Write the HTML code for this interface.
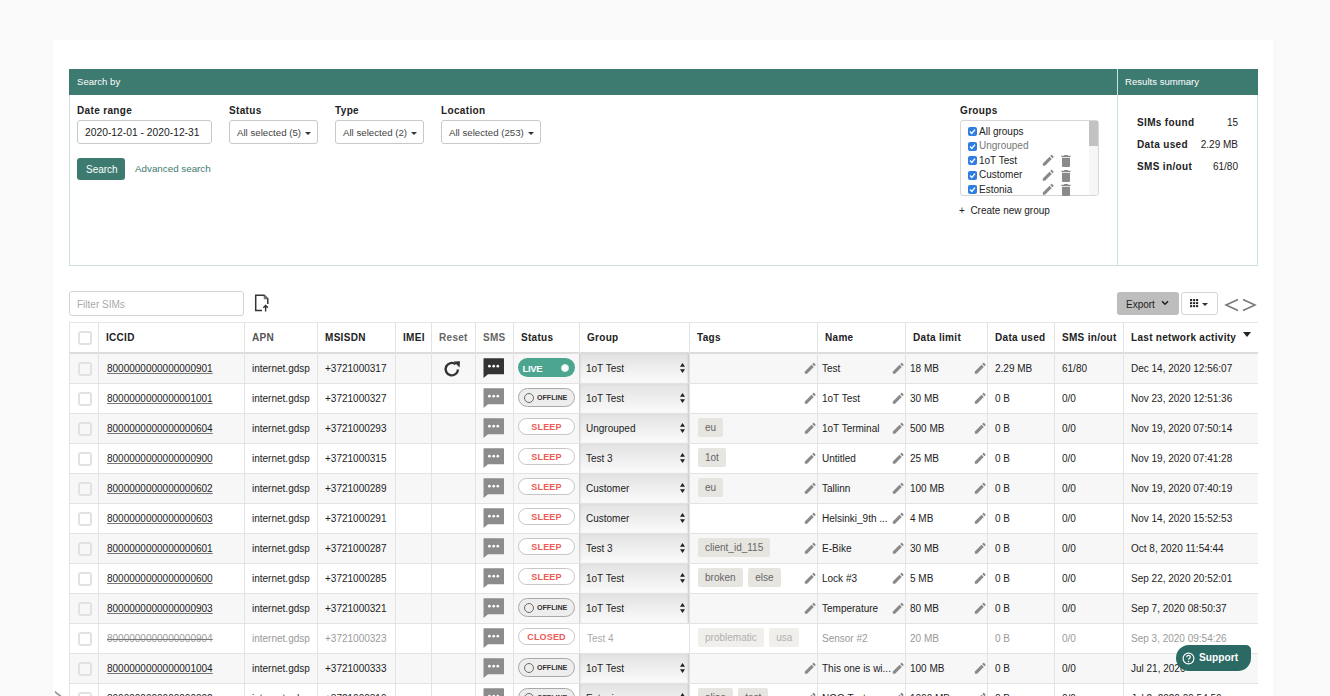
<!DOCTYPE html>
<html><head><meta charset="utf-8"><style>
*{box-sizing:border-box;margin:0;padding:0}
html,body{width:1330px;height:696px;overflow:hidden;background:#f9f9f9;font-family:"Liberation Sans", sans-serif;color:#222}
.a{position:absolute}
.t{position:absolute;white-space:nowrap;line-height:1}
.lbl{font-weight:bold;font-size:10px;letter-spacing:0.35px;color:#222}
.inp{position:absolute;background:#fff;border:1px solid #c9c9c9;border-radius:3px}
.caret{display:inline-block;width:0;height:0;border-left:3px solid transparent;border-right:3px solid transparent;border-top:3px solid #333;vertical-align:middle;margin-left:4px}
.hd{font-weight:bold;font-size:10px;letter-spacing:0.3px;color:#222}
.cell{font-size:10px;color:#222}
</style></head><body>
<div class="a" style="left:53px;top:40px;width:1220px;height:700px;background:#fff"></div>

<div class="a" style="left:69px;top:69px;width:1189px;height:197px;border:1px solid #cfe1dd;border-top:none"></div>
<div class="a" style="left:69px;top:69px;width:1048px;height:26px;background:#3d7a70"></div>
<div class="a" style="left:1118px;top:69px;width:140px;height:26px;background:#3d7a70"></div>
<div class="a" style="left:1117px;top:69px;width:1px;height:197px;background:#cfe1dd"></div>
<div class="t" style="left:77px;top:77px;font-size:9.6px;color:#fff">Search by</div>
<div class="t" style="left:1125px;top:77px;font-size:9.6px;color:#fff">Results summary</div>
<div class="t lbl" style="left:77px;top:106px">Date range</div>
<div class="inp" style="left:77px;top:120px;width:135px;height:24px"></div>
<div class="t" style="left:85px;top:128px;font-size:10.3px;color:#222">2020-12-01 - 2020-12-31</div>
<div class="t lbl" style="left:229px;top:106px">Status</div>
<div class="inp" style="left:229px;top:120px;width:89px;height:24px"></div>
<div class="t" style="left:237px;top:128px;font-size:9.7px;color:#444">All selected (5)<span class="caret"></span></div>
<div class="t lbl" style="left:335px;top:106px">Type</div>
<div class="inp" style="left:335px;top:120px;width:89px;height:24px"></div>
<div class="t" style="left:343px;top:128px;font-size:9.7px;color:#444">All selected (2)<span class="caret"></span></div>
<div class="t lbl" style="left:441px;top:106px">Location</div>
<div class="inp" style="left:441px;top:120px;width:100px;height:24px"></div>
<div class="t" style="left:449px;top:128px;font-size:9.7px;color:#444">All selected (253)<span class="caret"></span></div>
<div class="a" style="left:77px;top:158px;width:48px;height:22px;background:#3d7a70;border-radius:3px"></div>
<div class="t" style="left:86px;top:165px;font-size:10px;color:#fff">Search</div>
<div class="t" style="left:135px;top:164px;font-size:9.8px;color:#3d7a70">Advanced search</div>
<div class="t lbl" style="left:960px;top:106px">Groups</div>
<div class="inp" style="left:960px;top:120px;width:139px;height:76px;border-color:#d6d6d6"></div>
<div class="a" style="left:1089px;top:121px;width:9px;height:74px;background:#f6f6f6"></div>
<div class="a" style="left:1089px;top:121px;width:9px;height:25px;background:#c2c2c2"></div>
<div class="a" style="left:968px;top:127.0px;width:9px;height:9px;background:#2f7de1;border-radius:2px"></div>
<svg class="a" style="left:968px;top:127.0px" width="9" height="9" viewBox="0 0 9 9"><path d="M2 4.6L3.8 6.4L7 2.6" fill="none" stroke="#fff" stroke-width="1.4"/></svg>
<div class="t" style="left:979px;top:126.5px;font-size:10px;color:#222">All groups</div>
<div class="a" style="left:968px;top:141.5px;width:9px;height:9px;background:#2f7de1;border-radius:2px"></div>
<svg class="a" style="left:968px;top:141.5px" width="9" height="9" viewBox="0 0 9 9"><path d="M2 4.6L3.8 6.4L7 2.6" fill="none" stroke="#fff" stroke-width="1.4"/></svg>
<div class="t" style="left:979px;top:141.0px;font-size:10px;color:#777">Ungrouped</div>
<div class="a" style="left:968px;top:156.0px;width:9px;height:9px;background:#2f7de1;border-radius:2px"></div>
<svg class="a" style="left:968px;top:156.0px" width="9" height="9" viewBox="0 0 9 9"><path d="M2 4.6L3.8 6.4L7 2.6" fill="none" stroke="#fff" stroke-width="1.4"/></svg>
<div class="t" style="left:979px;top:155.5px;font-size:10px;color:#222">1oT Test</div>
<svg style="position:absolute;left:1041px;top:153.0px" width="14.5" height="14.5" viewBox="0 0 24 24"><path fill="#8a8a8a" d="M3 17.25V21h3.75L17.81 9.94l-3.75-3.75L3 17.25zM20.71 7.04c.39-.39.39-1.02 0-1.41l-2.34-2.34c-.39-.39-1.02-.39-1.41 0l-1.83 1.83 3.75 3.75 1.83-1.83z"/></svg>
<svg style="position:absolute;left:1061px;top:155.0px" width="10" height="12" viewBox="5 3 14 18"><path fill="#8a8a8a" d="M6 19c0 1.1.9 2 2 2h8c1.1 0 2-.9 2-2V7H6v12zM19 4h-3.5l-1-1h-5l-1 1H5v2h14V4z"/></svg>
<div class="a" style="left:968px;top:170.5px;width:9px;height:9px;background:#2f7de1;border-radius:2px"></div>
<svg class="a" style="left:968px;top:170.5px" width="9" height="9" viewBox="0 0 9 9"><path d="M2 4.6L3.8 6.4L7 2.6" fill="none" stroke="#fff" stroke-width="1.4"/></svg>
<div class="t" style="left:979px;top:170.0px;font-size:10px;color:#222">Customer</div>
<svg style="position:absolute;left:1041px;top:167.5px" width="14.5" height="14.5" viewBox="0 0 24 24"><path fill="#8a8a8a" d="M3 17.25V21h3.75L17.81 9.94l-3.75-3.75L3 17.25zM20.71 7.04c.39-.39.39-1.02 0-1.41l-2.34-2.34c-.39-.39-1.02-.39-1.41 0l-1.83 1.83 3.75 3.75 1.83-1.83z"/></svg>
<svg style="position:absolute;left:1061px;top:169.5px" width="10" height="12" viewBox="5 3 14 18"><path fill="#8a8a8a" d="M6 19c0 1.1.9 2 2 2h8c1.1 0 2-.9 2-2V7H6v12zM19 4h-3.5l-1-1h-5l-1 1H5v2h14V4z"/></svg>
<div class="a" style="left:968px;top:185.0px;width:9px;height:9px;background:#2f7de1;border-radius:2px"></div>
<svg class="a" style="left:968px;top:185.0px" width="9" height="9" viewBox="0 0 9 9"><path d="M2 4.6L3.8 6.4L7 2.6" fill="none" stroke="#fff" stroke-width="1.4"/></svg>
<div class="t" style="left:979px;top:184.5px;font-size:10px;color:#222">Estonia</div>
<svg style="position:absolute;left:1041px;top:182.0px" width="14.5" height="14.5" viewBox="0 0 24 24"><path fill="#8a8a8a" d="M3 17.25V21h3.75L17.81 9.94l-3.75-3.75L3 17.25zM20.71 7.04c.39-.39.39-1.02 0-1.41l-2.34-2.34c-.39-.39-1.02-.39-1.41 0l-1.83 1.83 3.75 3.75 1.83-1.83z"/></svg>
<svg style="position:absolute;left:1061px;top:184.0px" width="10" height="12" viewBox="5 3 14 18"><path fill="#8a8a8a" d="M6 19c0 1.1.9 2 2 2h8c1.1 0 2-.9 2-2V7H6v12zM19 4h-3.5l-1-1h-5l-1 1H5v2h14V4z"/></svg>
<div class="t" style="left:959px;top:206px;font-size:10px;color:#222">+&nbsp;&nbsp;Create new group</div>
<div class="t lbl" style="left:1137px;top:118px">SIMs found</div>
<div class="t" style="left:1138px;width:100px;text-align:right;top:118px;font-size:10px;color:#222">15</div>
<div class="t lbl" style="left:1137px;top:140px">Data used</div>
<div class="t" style="left:1138px;width:100px;text-align:right;top:140px;font-size:10px;color:#222">2.29 MB</div>
<div class="t lbl" style="left:1137px;top:162px">SMS in/out</div>
<div class="t" style="left:1138px;width:100px;text-align:right;top:162px;font-size:10px;color:#222">61/80</div>
<div class="inp" style="left:69px;top:291px;width:175px;height:25px;border-color:#d3d3d3"></div>
<div class="t" style="left:77px;top:299.5px;font-size:10px;color:#aaa">Filter SIMs</div>
<svg class="a" style="left:254px;top:294px" width="16" height="18" viewBox="0 0 16 18"><path d="M8 16.5H1.7V1.2H10.2L13.8 4.8V10" fill="none" stroke="#333" stroke-width="1.5"/><path d="M10.2 1.2V4.8H13.8" fill="#888" stroke="#555" stroke-width="0.8"/><path d="M11.6 17.5V11.8M9.3 13.8L11.6 11.5L13.9 13.8" fill="none" stroke="#333" stroke-width="1.4"/></svg>
<div class="a" style="left:1117px;top:292px;width:62px;height:23px;background:#bdbdbd;border-radius:3px"></div>
<div class="t" style="left:1126px;top:300px;font-size:10px;color:#222">Export</div>
<svg class="a" style="left:1161px;top:300px" width="8" height="6" viewBox="0 0 8 6"><path d="M1 1.2L4 4.2L7 1.2" fill="none" stroke="#222" stroke-width="1.6"/></svg>
<div class="inp" style="left:1181px;top:292px;width:37px;height:23px;border-color:#d6d6d6"></div>
<svg class="a" style="left:1190px;top:299px" width="9" height="9" viewBox="0 0 9 9"><circle cx="1.1" cy="1.1" r="1.2" fill="#222"/><circle cx="1.1" cy="4.1" r="1.2" fill="#222"/><circle cx="1.1" cy="7.1" r="1.2" fill="#222"/><circle cx="4.1" cy="1.1" r="1.2" fill="#222"/><circle cx="4.1" cy="4.1" r="1.2" fill="#222"/><circle cx="4.1" cy="7.1" r="1.2" fill="#222"/><circle cx="7.1" cy="1.1" r="1.2" fill="#222"/><circle cx="7.1" cy="4.1" r="1.2" fill="#222"/><circle cx="7.1" cy="7.1" r="1.2" fill="#222"/></svg>
<div class="a" style="left:1202px;top:303px;width:0;height:0;border-left:3px solid transparent;border-right:3px solid transparent;border-top:3px solid #333"></div>
<svg class="a" style="left:1224px;top:297px" width="34" height="16" viewBox="0 0 34 16"><path d="M14 2.5L2 8L14 13.5M19 2.5L31 8L19 13.5" fill="none" stroke="#777" stroke-width="1.5"/></svg>
<div class="a" style="left:69px;top:353px;width:1189px;height:30px;background:#f7f7f7"></div>
<div class="a" style="left:69px;top:383px;width:1189px;height:30px;background:#fff"></div>
<div class="a" style="left:69px;top:413px;width:1189px;height:30px;background:#f7f7f7"></div>
<div class="a" style="left:69px;top:443px;width:1189px;height:30px;background:#fff"></div>
<div class="a" style="left:69px;top:473px;width:1189px;height:30px;background:#f7f7f7"></div>
<div class="a" style="left:69px;top:503px;width:1189px;height:30px;background:#fff"></div>
<div class="a" style="left:69px;top:533px;width:1189px;height:30px;background:#f7f7f7"></div>
<div class="a" style="left:69px;top:563px;width:1189px;height:30px;background:#fff"></div>
<div class="a" style="left:69px;top:593px;width:1189px;height:30px;background:#f7f7f7"></div>
<div class="a" style="left:69px;top:623px;width:1189px;height:30px;background:#fff"></div>
<div class="a" style="left:69px;top:653px;width:1189px;height:30px;background:#f7f7f7"></div>
<div class="a" style="left:69px;top:683px;width:1189px;height:30px;background:#fff"></div>
<div class="a" style="left:69px;top:322px;width:1189px;height:1px;background:#e6e6e6"></div>
<div class="a" style="left:69px;top:352px;width:1189px;height:2px;background:#dcdcdc"></div>
<div class="a" style="left:69px;top:383px;width:1189px;height:1px;background:#e3e3e3"></div>
<div class="a" style="left:69px;top:413px;width:1189px;height:1px;background:#e3e3e3"></div>
<div class="a" style="left:69px;top:443px;width:1189px;height:1px;background:#e3e3e3"></div>
<div class="a" style="left:69px;top:473px;width:1189px;height:1px;background:#e3e3e3"></div>
<div class="a" style="left:69px;top:503px;width:1189px;height:1px;background:#e3e3e3"></div>
<div class="a" style="left:69px;top:533px;width:1189px;height:1px;background:#e3e3e3"></div>
<div class="a" style="left:69px;top:563px;width:1189px;height:1px;background:#e3e3e3"></div>
<div class="a" style="left:69px;top:593px;width:1189px;height:1px;background:#e3e3e3"></div>
<div class="a" style="left:69px;top:623px;width:1189px;height:1px;background:#e3e3e3"></div>
<div class="a" style="left:69px;top:653px;width:1189px;height:1px;background:#e3e3e3"></div>
<div class="a" style="left:69px;top:683px;width:1189px;height:1px;background:#e3e3e3"></div>
<div class="a" style="left:69px;top:713px;width:1189px;height:1px;background:#e3e3e3"></div>
<div class="a" style="left:69px;top:322px;width:1px;height:391px;background:#e3e3e3"></div>
<div class="a" style="left:98px;top:322px;width:1px;height:391px;background:#e3e3e3"></div>
<div class="a" style="left:244px;top:322px;width:1px;height:391px;background:#e3e3e3"></div>
<div class="a" style="left:317px;top:322px;width:1px;height:391px;background:#e3e3e3"></div>
<div class="a" style="left:395px;top:322px;width:1px;height:391px;background:#e3e3e3"></div>
<div class="a" style="left:431px;top:322px;width:1px;height:391px;background:#e3e3e3"></div>
<div class="a" style="left:475px;top:322px;width:1px;height:391px;background:#e3e3e3"></div>
<div class="a" style="left:513px;top:322px;width:1px;height:391px;background:#e3e3e3"></div>
<div class="a" style="left:579px;top:322px;width:1px;height:391px;background:#e3e3e3"></div>
<div class="a" style="left:689px;top:322px;width:1px;height:391px;background:#e3e3e3"></div>
<div class="a" style="left:817px;top:322px;width:1px;height:391px;background:#e3e3e3"></div>
<div class="a" style="left:905px;top:322px;width:1px;height:391px;background:#e3e3e3"></div>
<div class="a" style="left:987px;top:322px;width:1px;height:391px;background:#e3e3e3"></div>
<div class="a" style="left:1054px;top:322px;width:1px;height:391px;background:#e3e3e3"></div>
<div class="a" style="left:1123px;top:322px;width:1px;height:391px;background:#e3e3e3"></div>
<div class="a" style="left:78px;top:331px;width:14px;height:14px;border:2px solid #e2e2e2;border-radius:3px;background:#fff"></div>
<div class="t hd" style="left:106px;top:333px;color:#222">ICCID</div>
<div class="t hd" style="left:252px;top:333px;color:#555">APN</div>
<div class="t hd" style="left:325px;top:333px;color:#222">MSISDN</div>
<div class="t hd" style="left:403px;top:333px;color:#222">IMEI</div>
<div class="t hd" style="left:439px;top:333px;color:#666">Reset</div>
<div class="t hd" style="left:483px;top:333px;color:#666">SMS</div>
<div class="t hd" style="left:521px;top:333px;color:#222">Status</div>
<div class="t hd" style="left:587px;top:333px;color:#222">Group</div>
<div class="t hd" style="left:697px;top:333px;color:#222">Tags</div>
<div class="t hd" style="left:825px;top:333px;color:#222">Name</div>
<div class="t hd" style="left:913px;top:333px;color:#222">Data limit</div>
<div class="t hd" style="left:995px;top:333px;color:#222">Data used</div>
<div class="t hd" style="left:1062px;top:333px;color:#222">SMS in/out</div>
<div class="t hd" style="left:1131px;top:333px;color:#222">Last network activity</div>
<div class="a" style="left:1243px;top:332px;width:0;height:0;border-left:4px solid transparent;border-right:4px solid transparent;border-top:5px solid #222"></div>
<div class="a" style="left:77.5px;top:361.5px;width:14px;height:14px;border:2px solid #e2e2e2;border-radius:3px"></div>
<div class="t cell" style="left:107px;top:363.5px;color:#222;text-decoration:underline;text-decoration-color:#777">8000000000000000901</div>
<div class="t cell" style="left:252px;top:363.5px;color:#222">internet.gdsp</div>
<div class="t cell" style="left:325px;top:363.5px;color:#222">+3721000317</div>
<svg style="position:absolute;left:443px;top:360px" width="18" height="18" viewBox="0 0 18 18"><path fill="none" stroke="#333" stroke-width="2.4" d="M15 9.5A6.2 6.2 0 1 1 12.6 4.2"/><path fill="#333" d="M10.5 1.5L17 1.2L16.6 7.5Z"/></svg>
<svg style="position:absolute;left:483px;top:358px" width="22" height="21" viewBox="0 0 22 21"><path fill="#333" d="M1.6 0.2H20.4Q21 0.2 21 0.8V15.7Q21 16.3 20.4 16.3H5L0.5 20V0.8Q0.5 0.2 1.1 0.2Z"/><circle cx="6.4" cy="8.2" r="1.35" fill="#fff"/><circle cx="10.7" cy="8.2" r="1.35" fill="#fff"/><circle cx="14.8" cy="8.2" r="1.35" fill="#fff"/></svg>
<div class="a" style="left:518px;top:358px;width:57px;height:19px;border-radius:10px;background:#4ba58f"></div>
<div class="t" style="left:522.5px;top:363.5px;font-size:9.6px;letter-spacing:-0.35px;font-weight:bold;color:#fff">LIVE</div>
<div class="a" style="left:560.5px;top:363.5px;width:8.8px;height:8.8px;border-radius:50%;background:#fff;border:1px solid #d8ece6"></div>
<div class="a" style="left:579px;top:354px;width:110px;height:29px;background:linear-gradient(#e2e2e2,#fbfbfb);box-shadow:inset 2px 0 2px -1px #c8c8c8, inset -2px 0 2px -1px #c8c8c8"></div>
<div class="t cell" style="left:586px;top:363.5px">1oT Test</div>
<svg class="a" style="left:680px;top:363px" width="5" height="10" viewBox="0 0 5 10"><path d="M2.5 0L5 3.8H0Z M2.5 10L5 6.2H0Z" fill="#222"/></svg>
<svg style="position:absolute;left:803px;top:360.5px" width="14.5" height="14.5" viewBox="0 0 24 24"><path fill="#8a8a8a" d="M3 17.25V21h3.75L17.81 9.94l-3.75-3.75L3 17.25zM20.71 7.04c.39-.39.39-1.02 0-1.41l-2.34-2.34c-.39-.39-1.02-.39-1.41 0l-1.83 1.83 3.75 3.75 1.83-1.83z"/></svg>
<svg style="position:absolute;left:891px;top:360.5px" width="14.5" height="14.5" viewBox="0 0 24 24"><path fill="#8a8a8a" d="M3 17.25V21h3.75L17.81 9.94l-3.75-3.75L3 17.25zM20.71 7.04c.39-.39.39-1.02 0-1.41l-2.34-2.34c-.39-.39-1.02-.39-1.41 0l-1.83 1.83 3.75 3.75 1.83-1.83z"/></svg>
<svg style="position:absolute;left:973px;top:360.5px" width="14.5" height="14.5" viewBox="0 0 24 24"><path fill="#8a8a8a" d="M3 17.25V21h3.75L17.81 9.94l-3.75-3.75L3 17.25zM20.71 7.04c.39-.39.39-1.02 0-1.41l-2.34-2.34c-.39-.39-1.02-.39-1.41 0l-1.83 1.83 3.75 3.75 1.83-1.83z"/></svg>
<div class="t cell" style="left:822px;top:363.5px;color:#222">Test</div>
<div class="t cell" style="left:910px;top:363.5px;color:#222">18 MB</div>
<div class="t cell" style="left:995px;top:363.5px;color:#222">2.29 MB</div>
<div class="t cell" style="left:1062px;top:363.5px;color:#222">61/80</div>
<div class="t cell" style="left:1131px;top:363.5px;color:#222">Dec 14, 2020 12:56:07</div>
<div class="a" style="left:77.5px;top:391.5px;width:14px;height:14px;border:2px solid #e2e2e2;border-radius:3px"></div>
<div class="t cell" style="left:107px;top:393.5px;color:#222;text-decoration:underline;text-decoration-color:#777">8000000000000001001</div>
<div class="t cell" style="left:252px;top:393.5px;color:#222">internet.gdsp</div>
<div class="t cell" style="left:325px;top:393.5px;color:#222">+3721000327</div>
<svg style="position:absolute;left:483px;top:388px" width="22" height="21" viewBox="0 0 22 21"><path fill="#8c8c8c" d="M1.6 0.2H20.4Q21 0.2 21 0.8V15.7Q21 16.3 20.4 16.3H5L0.5 20V0.8Q0.5 0.2 1.1 0.2Z"/><circle cx="6.4" cy="8.2" r="1.35" fill="#fff"/><circle cx="10.7" cy="8.2" r="1.35" fill="#fff"/><circle cx="14.8" cy="8.2" r="1.35" fill="#fff"/></svg>
<div class="a" style="left:518px;top:388px;width:57px;height:19px;border-radius:10px;background:#ededed;border:1px solid #a9a9a9"></div>
<div class="a" style="left:523.5px;top:392.8px;width:10px;height:10px;border-radius:50%;border:1.4px solid #6a6a6a"></div>
<div class="t" style="left:537px;top:394.5px;font-size:7.1px;font-weight:bold;color:#333">OFFLINE</div>
<div class="a" style="left:579px;top:384px;width:110px;height:29px;background:linear-gradient(#e2e2e2,#fbfbfb);box-shadow:inset 2px 0 2px -1px #c8c8c8, inset -2px 0 2px -1px #c8c8c8"></div>
<div class="t cell" style="left:586px;top:393.5px">1oT Test</div>
<svg class="a" style="left:680px;top:393px" width="5" height="10" viewBox="0 0 5 10"><path d="M2.5 0L5 3.8H0Z M2.5 10L5 6.2H0Z" fill="#222"/></svg>
<svg style="position:absolute;left:803px;top:390.5px" width="14.5" height="14.5" viewBox="0 0 24 24"><path fill="#8a8a8a" d="M3 17.25V21h3.75L17.81 9.94l-3.75-3.75L3 17.25zM20.71 7.04c.39-.39.39-1.02 0-1.41l-2.34-2.34c-.39-.39-1.02-.39-1.41 0l-1.83 1.83 3.75 3.75 1.83-1.83z"/></svg>
<svg style="position:absolute;left:891px;top:390.5px" width="14.5" height="14.5" viewBox="0 0 24 24"><path fill="#8a8a8a" d="M3 17.25V21h3.75L17.81 9.94l-3.75-3.75L3 17.25zM20.71 7.04c.39-.39.39-1.02 0-1.41l-2.34-2.34c-.39-.39-1.02-.39-1.41 0l-1.83 1.83 3.75 3.75 1.83-1.83z"/></svg>
<svg style="position:absolute;left:973px;top:390.5px" width="14.5" height="14.5" viewBox="0 0 24 24"><path fill="#8a8a8a" d="M3 17.25V21h3.75L17.81 9.94l-3.75-3.75L3 17.25zM20.71 7.04c.39-.39.39-1.02 0-1.41l-2.34-2.34c-.39-.39-1.02-.39-1.41 0l-1.83 1.83 3.75 3.75 1.83-1.83z"/></svg>
<div class="t cell" style="left:822px;top:393.5px;color:#222">1oT Test</div>
<div class="t cell" style="left:910px;top:393.5px;color:#222">30 MB</div>
<div class="t cell" style="left:995px;top:393.5px;color:#222">0 B</div>
<div class="t cell" style="left:1062px;top:393.5px;color:#222">0/0</div>
<div class="t cell" style="left:1131px;top:393.5px;color:#222">Nov 23, 2020 12:51:36</div>
<div class="a" style="left:77.5px;top:421.5px;width:14px;height:14px;border:2px solid #e2e2e2;border-radius:3px"></div>
<div class="t cell" style="left:107px;top:423.5px;color:#222;text-decoration:underline;text-decoration-color:#777">8000000000000000604</div>
<div class="t cell" style="left:252px;top:423.5px;color:#222">internet.gdsp</div>
<div class="t cell" style="left:325px;top:423.5px;color:#222">+3721000293</div>
<svg style="position:absolute;left:483px;top:418px" width="22" height="21" viewBox="0 0 22 21"><path fill="#8c8c8c" d="M1.6 0.2H20.4Q21 0.2 21 0.8V15.7Q21 16.3 20.4 16.3H5L0.5 20V0.8Q0.5 0.2 1.1 0.2Z"/><circle cx="6.4" cy="8.2" r="1.35" fill="#fff"/><circle cx="10.7" cy="8.2" r="1.35" fill="#fff"/><circle cx="14.8" cy="8.2" r="1.35" fill="#fff"/></svg>
<div class="a" style="left:518px;top:418px;width:57px;height:17px;border-radius:9px;background:#fff;border:1px solid #c6c6c6"></div>
<div class="t" style="left:518px;width:57px;text-align:center;top:422.5px;font-size:9px;letter-spacing:0.15px;font-weight:bold;color:#ec5a55">SLEEP</div>
<div class="a" style="left:579px;top:414px;width:110px;height:29px;background:linear-gradient(#e2e2e2,#fbfbfb);box-shadow:inset 2px 0 2px -1px #c8c8c8, inset -2px 0 2px -1px #c8c8c8"></div>
<div class="t cell" style="left:586px;top:423.5px">Ungrouped</div>
<svg class="a" style="left:680px;top:423px" width="5" height="10" viewBox="0 0 5 10"><path d="M2.5 0L5 3.8H0Z M2.5 10L5 6.2H0Z" fill="#222"/></svg>
<div class="t cell" style="left:698px;top:418px;line-height:19px"><span style="display:inline-block;height:19px;line-height:19px;padding:0 7px;margin-right:5.6px;border-radius:2px;background:#e6e5e0;color:#666">eu</span></div>
<svg style="position:absolute;left:803px;top:420.5px" width="14.5" height="14.5" viewBox="0 0 24 24"><path fill="#8a8a8a" d="M3 17.25V21h3.75L17.81 9.94l-3.75-3.75L3 17.25zM20.71 7.04c.39-.39.39-1.02 0-1.41l-2.34-2.34c-.39-.39-1.02-.39-1.41 0l-1.83 1.83 3.75 3.75 1.83-1.83z"/></svg>
<svg style="position:absolute;left:891px;top:420.5px" width="14.5" height="14.5" viewBox="0 0 24 24"><path fill="#8a8a8a" d="M3 17.25V21h3.75L17.81 9.94l-3.75-3.75L3 17.25zM20.71 7.04c.39-.39.39-1.02 0-1.41l-2.34-2.34c-.39-.39-1.02-.39-1.41 0l-1.83 1.83 3.75 3.75 1.83-1.83z"/></svg>
<svg style="position:absolute;left:973px;top:420.5px" width="14.5" height="14.5" viewBox="0 0 24 24"><path fill="#8a8a8a" d="M3 17.25V21h3.75L17.81 9.94l-3.75-3.75L3 17.25zM20.71 7.04c.39-.39.39-1.02 0-1.41l-2.34-2.34c-.39-.39-1.02-.39-1.41 0l-1.83 1.83 3.75 3.75 1.83-1.83z"/></svg>
<div class="t cell" style="left:822px;top:423.5px;color:#222">1oT Terminal</div>
<div class="t cell" style="left:910px;top:423.5px;color:#222">500 MB</div>
<div class="t cell" style="left:995px;top:423.5px;color:#222">0 B</div>
<div class="t cell" style="left:1062px;top:423.5px;color:#222">0/0</div>
<div class="t cell" style="left:1131px;top:423.5px;color:#222">Nov 19, 2020 07:50:14</div>
<div class="a" style="left:77.5px;top:451.5px;width:14px;height:14px;border:2px solid #e2e2e2;border-radius:3px"></div>
<div class="t cell" style="left:107px;top:453.5px;color:#222;text-decoration:underline;text-decoration-color:#777">8000000000000000900</div>
<div class="t cell" style="left:252px;top:453.5px;color:#222">internet.gdsp</div>
<div class="t cell" style="left:325px;top:453.5px;color:#222">+3721000315</div>
<svg style="position:absolute;left:483px;top:448px" width="22" height="21" viewBox="0 0 22 21"><path fill="#8c8c8c" d="M1.6 0.2H20.4Q21 0.2 21 0.8V15.7Q21 16.3 20.4 16.3H5L0.5 20V0.8Q0.5 0.2 1.1 0.2Z"/><circle cx="6.4" cy="8.2" r="1.35" fill="#fff"/><circle cx="10.7" cy="8.2" r="1.35" fill="#fff"/><circle cx="14.8" cy="8.2" r="1.35" fill="#fff"/></svg>
<div class="a" style="left:518px;top:448px;width:57px;height:17px;border-radius:9px;background:#fff;border:1px solid #c6c6c6"></div>
<div class="t" style="left:518px;width:57px;text-align:center;top:452.5px;font-size:9px;letter-spacing:0.15px;font-weight:bold;color:#ec5a55">SLEEP</div>
<div class="a" style="left:579px;top:444px;width:110px;height:29px;background:linear-gradient(#e2e2e2,#fbfbfb);box-shadow:inset 2px 0 2px -1px #c8c8c8, inset -2px 0 2px -1px #c8c8c8"></div>
<div class="t cell" style="left:586px;top:453.5px">Test 3</div>
<svg class="a" style="left:680px;top:453px" width="5" height="10" viewBox="0 0 5 10"><path d="M2.5 0L5 3.8H0Z M2.5 10L5 6.2H0Z" fill="#222"/></svg>
<div class="t cell" style="left:698px;top:448px;line-height:19px"><span style="display:inline-block;height:19px;line-height:19px;padding:0 7px;margin-right:5.6px;border-radius:2px;background:#e6e5e0;color:#666">1ot</span></div>
<svg style="position:absolute;left:803px;top:450.5px" width="14.5" height="14.5" viewBox="0 0 24 24"><path fill="#8a8a8a" d="M3 17.25V21h3.75L17.81 9.94l-3.75-3.75L3 17.25zM20.71 7.04c.39-.39.39-1.02 0-1.41l-2.34-2.34c-.39-.39-1.02-.39-1.41 0l-1.83 1.83 3.75 3.75 1.83-1.83z"/></svg>
<svg style="position:absolute;left:891px;top:450.5px" width="14.5" height="14.5" viewBox="0 0 24 24"><path fill="#8a8a8a" d="M3 17.25V21h3.75L17.81 9.94l-3.75-3.75L3 17.25zM20.71 7.04c.39-.39.39-1.02 0-1.41l-2.34-2.34c-.39-.39-1.02-.39-1.41 0l-1.83 1.83 3.75 3.75 1.83-1.83z"/></svg>
<svg style="position:absolute;left:973px;top:450.5px" width="14.5" height="14.5" viewBox="0 0 24 24"><path fill="#8a8a8a" d="M3 17.25V21h3.75L17.81 9.94l-3.75-3.75L3 17.25zM20.71 7.04c.39-.39.39-1.02 0-1.41l-2.34-2.34c-.39-.39-1.02-.39-1.41 0l-1.83 1.83 3.75 3.75 1.83-1.83z"/></svg>
<div class="t cell" style="left:822px;top:453.5px;color:#222">Untitled</div>
<div class="t cell" style="left:910px;top:453.5px;color:#222">25 MB</div>
<div class="t cell" style="left:995px;top:453.5px;color:#222">0 B</div>
<div class="t cell" style="left:1062px;top:453.5px;color:#222">0/0</div>
<div class="t cell" style="left:1131px;top:453.5px;color:#222">Nov 19, 2020 07:41:28</div>
<div class="a" style="left:77.5px;top:481.5px;width:14px;height:14px;border:2px solid #e2e2e2;border-radius:3px"></div>
<div class="t cell" style="left:107px;top:483.5px;color:#222;text-decoration:underline;text-decoration-color:#777">8000000000000000602</div>
<div class="t cell" style="left:252px;top:483.5px;color:#222">internet.gdsp</div>
<div class="t cell" style="left:325px;top:483.5px;color:#222">+3721000289</div>
<svg style="position:absolute;left:483px;top:478px" width="22" height="21" viewBox="0 0 22 21"><path fill="#8c8c8c" d="M1.6 0.2H20.4Q21 0.2 21 0.8V15.7Q21 16.3 20.4 16.3H5L0.5 20V0.8Q0.5 0.2 1.1 0.2Z"/><circle cx="6.4" cy="8.2" r="1.35" fill="#fff"/><circle cx="10.7" cy="8.2" r="1.35" fill="#fff"/><circle cx="14.8" cy="8.2" r="1.35" fill="#fff"/></svg>
<div class="a" style="left:518px;top:478px;width:57px;height:17px;border-radius:9px;background:#fff;border:1px solid #c6c6c6"></div>
<div class="t" style="left:518px;width:57px;text-align:center;top:482.5px;font-size:9px;letter-spacing:0.15px;font-weight:bold;color:#ec5a55">SLEEP</div>
<div class="a" style="left:579px;top:474px;width:110px;height:29px;background:linear-gradient(#e2e2e2,#fbfbfb);box-shadow:inset 2px 0 2px -1px #c8c8c8, inset -2px 0 2px -1px #c8c8c8"></div>
<div class="t cell" style="left:586px;top:483.5px">Customer</div>
<svg class="a" style="left:680px;top:483px" width="5" height="10" viewBox="0 0 5 10"><path d="M2.5 0L5 3.8H0Z M2.5 10L5 6.2H0Z" fill="#222"/></svg>
<div class="t cell" style="left:698px;top:478px;line-height:19px"><span style="display:inline-block;height:19px;line-height:19px;padding:0 7px;margin-right:5.6px;border-radius:2px;background:#e6e5e0;color:#666">eu</span></div>
<svg style="position:absolute;left:803px;top:480.5px" width="14.5" height="14.5" viewBox="0 0 24 24"><path fill="#8a8a8a" d="M3 17.25V21h3.75L17.81 9.94l-3.75-3.75L3 17.25zM20.71 7.04c.39-.39.39-1.02 0-1.41l-2.34-2.34c-.39-.39-1.02-.39-1.41 0l-1.83 1.83 3.75 3.75 1.83-1.83z"/></svg>
<svg style="position:absolute;left:891px;top:480.5px" width="14.5" height="14.5" viewBox="0 0 24 24"><path fill="#8a8a8a" d="M3 17.25V21h3.75L17.81 9.94l-3.75-3.75L3 17.25zM20.71 7.04c.39-.39.39-1.02 0-1.41l-2.34-2.34c-.39-.39-1.02-.39-1.41 0l-1.83 1.83 3.75 3.75 1.83-1.83z"/></svg>
<svg style="position:absolute;left:973px;top:480.5px" width="14.5" height="14.5" viewBox="0 0 24 24"><path fill="#8a8a8a" d="M3 17.25V21h3.75L17.81 9.94l-3.75-3.75L3 17.25zM20.71 7.04c.39-.39.39-1.02 0-1.41l-2.34-2.34c-.39-.39-1.02-.39-1.41 0l-1.83 1.83 3.75 3.75 1.83-1.83z"/></svg>
<div class="t cell" style="left:822px;top:483.5px;color:#222">Tallinn</div>
<div class="t cell" style="left:910px;top:483.5px;color:#222">100 MB</div>
<div class="t cell" style="left:995px;top:483.5px;color:#222">0 B</div>
<div class="t cell" style="left:1062px;top:483.5px;color:#222">0/0</div>
<div class="t cell" style="left:1131px;top:483.5px;color:#222">Nov 19, 2020 07:40:19</div>
<div class="a" style="left:77.5px;top:511.5px;width:14px;height:14px;border:2px solid #e2e2e2;border-radius:3px"></div>
<div class="t cell" style="left:107px;top:513.5px;color:#222;text-decoration:underline;text-decoration-color:#777">8000000000000000603</div>
<div class="t cell" style="left:252px;top:513.5px;color:#222">internet.gdsp</div>
<div class="t cell" style="left:325px;top:513.5px;color:#222">+3721000291</div>
<svg style="position:absolute;left:483px;top:508px" width="22" height="21" viewBox="0 0 22 21"><path fill="#8c8c8c" d="M1.6 0.2H20.4Q21 0.2 21 0.8V15.7Q21 16.3 20.4 16.3H5L0.5 20V0.8Q0.5 0.2 1.1 0.2Z"/><circle cx="6.4" cy="8.2" r="1.35" fill="#fff"/><circle cx="10.7" cy="8.2" r="1.35" fill="#fff"/><circle cx="14.8" cy="8.2" r="1.35" fill="#fff"/></svg>
<div class="a" style="left:518px;top:508px;width:57px;height:17px;border-radius:9px;background:#fff;border:1px solid #c6c6c6"></div>
<div class="t" style="left:518px;width:57px;text-align:center;top:512.5px;font-size:9px;letter-spacing:0.15px;font-weight:bold;color:#ec5a55">SLEEP</div>
<div class="a" style="left:579px;top:504px;width:110px;height:29px;background:linear-gradient(#e2e2e2,#fbfbfb);box-shadow:inset 2px 0 2px -1px #c8c8c8, inset -2px 0 2px -1px #c8c8c8"></div>
<div class="t cell" style="left:586px;top:513.5px">Customer</div>
<svg class="a" style="left:680px;top:513px" width="5" height="10" viewBox="0 0 5 10"><path d="M2.5 0L5 3.8H0Z M2.5 10L5 6.2H0Z" fill="#222"/></svg>
<svg style="position:absolute;left:803px;top:510.5px" width="14.5" height="14.5" viewBox="0 0 24 24"><path fill="#8a8a8a" d="M3 17.25V21h3.75L17.81 9.94l-3.75-3.75L3 17.25zM20.71 7.04c.39-.39.39-1.02 0-1.41l-2.34-2.34c-.39-.39-1.02-.39-1.41 0l-1.83 1.83 3.75 3.75 1.83-1.83z"/></svg>
<svg style="position:absolute;left:891px;top:510.5px" width="14.5" height="14.5" viewBox="0 0 24 24"><path fill="#8a8a8a" d="M3 17.25V21h3.75L17.81 9.94l-3.75-3.75L3 17.25zM20.71 7.04c.39-.39.39-1.02 0-1.41l-2.34-2.34c-.39-.39-1.02-.39-1.41 0l-1.83 1.83 3.75 3.75 1.83-1.83z"/></svg>
<svg style="position:absolute;left:973px;top:510.5px" width="14.5" height="14.5" viewBox="0 0 24 24"><path fill="#8a8a8a" d="M3 17.25V21h3.75L17.81 9.94l-3.75-3.75L3 17.25zM20.71 7.04c.39-.39.39-1.02 0-1.41l-2.34-2.34c-.39-.39-1.02-.39-1.41 0l-1.83 1.83 3.75 3.75 1.83-1.83z"/></svg>
<div class="t cell" style="left:822px;top:513.5px;color:#222">Helsinki_9th ...</div>
<div class="t cell" style="left:910px;top:513.5px;color:#222">4 MB</div>
<div class="t cell" style="left:995px;top:513.5px;color:#222">0 B</div>
<div class="t cell" style="left:1062px;top:513.5px;color:#222">0/0</div>
<div class="t cell" style="left:1131px;top:513.5px;color:#222">Nov 14, 2020 15:52:53</div>
<div class="a" style="left:77.5px;top:541.5px;width:14px;height:14px;border:2px solid #e2e2e2;border-radius:3px"></div>
<div class="t cell" style="left:107px;top:543.5px;color:#222;text-decoration:underline;text-decoration-color:#777">8000000000000000601</div>
<div class="t cell" style="left:252px;top:543.5px;color:#222">internet.gdsp</div>
<div class="t cell" style="left:325px;top:543.5px;color:#222">+3721000287</div>
<svg style="position:absolute;left:483px;top:538px" width="22" height="21" viewBox="0 0 22 21"><path fill="#8c8c8c" d="M1.6 0.2H20.4Q21 0.2 21 0.8V15.7Q21 16.3 20.4 16.3H5L0.5 20V0.8Q0.5 0.2 1.1 0.2Z"/><circle cx="6.4" cy="8.2" r="1.35" fill="#fff"/><circle cx="10.7" cy="8.2" r="1.35" fill="#fff"/><circle cx="14.8" cy="8.2" r="1.35" fill="#fff"/></svg>
<div class="a" style="left:518px;top:538px;width:57px;height:17px;border-radius:9px;background:#fff;border:1px solid #c6c6c6"></div>
<div class="t" style="left:518px;width:57px;text-align:center;top:542.5px;font-size:9px;letter-spacing:0.15px;font-weight:bold;color:#ec5a55">SLEEP</div>
<div class="a" style="left:579px;top:534px;width:110px;height:29px;background:linear-gradient(#e2e2e2,#fbfbfb);box-shadow:inset 2px 0 2px -1px #c8c8c8, inset -2px 0 2px -1px #c8c8c8"></div>
<div class="t cell" style="left:586px;top:543.5px">Test 3</div>
<svg class="a" style="left:680px;top:543px" width="5" height="10" viewBox="0 0 5 10"><path d="M2.5 0L5 3.8H0Z M2.5 10L5 6.2H0Z" fill="#222"/></svg>
<div class="t cell" style="left:698px;top:538px;line-height:19px"><span style="display:inline-block;height:19px;line-height:19px;padding:0 7px;margin-right:5.6px;border-radius:2px;background:#e6e5e0;color:#666">client_id_115</span></div>
<svg style="position:absolute;left:803px;top:540.5px" width="14.5" height="14.5" viewBox="0 0 24 24"><path fill="#8a8a8a" d="M3 17.25V21h3.75L17.81 9.94l-3.75-3.75L3 17.25zM20.71 7.04c.39-.39.39-1.02 0-1.41l-2.34-2.34c-.39-.39-1.02-.39-1.41 0l-1.83 1.83 3.75 3.75 1.83-1.83z"/></svg>
<svg style="position:absolute;left:891px;top:540.5px" width="14.5" height="14.5" viewBox="0 0 24 24"><path fill="#8a8a8a" d="M3 17.25V21h3.75L17.81 9.94l-3.75-3.75L3 17.25zM20.71 7.04c.39-.39.39-1.02 0-1.41l-2.34-2.34c-.39-.39-1.02-.39-1.41 0l-1.83 1.83 3.75 3.75 1.83-1.83z"/></svg>
<svg style="position:absolute;left:973px;top:540.5px" width="14.5" height="14.5" viewBox="0 0 24 24"><path fill="#8a8a8a" d="M3 17.25V21h3.75L17.81 9.94l-3.75-3.75L3 17.25zM20.71 7.04c.39-.39.39-1.02 0-1.41l-2.34-2.34c-.39-.39-1.02-.39-1.41 0l-1.83 1.83 3.75 3.75 1.83-1.83z"/></svg>
<div class="t cell" style="left:822px;top:543.5px;color:#222">E-Bike</div>
<div class="t cell" style="left:910px;top:543.5px;color:#222">30 MB</div>
<div class="t cell" style="left:995px;top:543.5px;color:#222">0 B</div>
<div class="t cell" style="left:1062px;top:543.5px;color:#222">0/0</div>
<div class="t cell" style="left:1131px;top:543.5px;color:#222">Oct 8, 2020 11:54:44</div>
<div class="a" style="left:77.5px;top:571.5px;width:14px;height:14px;border:2px solid #e2e2e2;border-radius:3px"></div>
<div class="t cell" style="left:107px;top:573.5px;color:#222;text-decoration:underline;text-decoration-color:#777">8000000000000000600</div>
<div class="t cell" style="left:252px;top:573.5px;color:#222">internet.gdsp</div>
<div class="t cell" style="left:325px;top:573.5px;color:#222">+3721000285</div>
<svg style="position:absolute;left:483px;top:568px" width="22" height="21" viewBox="0 0 22 21"><path fill="#8c8c8c" d="M1.6 0.2H20.4Q21 0.2 21 0.8V15.7Q21 16.3 20.4 16.3H5L0.5 20V0.8Q0.5 0.2 1.1 0.2Z"/><circle cx="6.4" cy="8.2" r="1.35" fill="#fff"/><circle cx="10.7" cy="8.2" r="1.35" fill="#fff"/><circle cx="14.8" cy="8.2" r="1.35" fill="#fff"/></svg>
<div class="a" style="left:518px;top:568px;width:57px;height:17px;border-radius:9px;background:#fff;border:1px solid #c6c6c6"></div>
<div class="t" style="left:518px;width:57px;text-align:center;top:572.5px;font-size:9px;letter-spacing:0.15px;font-weight:bold;color:#ec5a55">SLEEP</div>
<div class="a" style="left:579px;top:564px;width:110px;height:29px;background:linear-gradient(#e2e2e2,#fbfbfb);box-shadow:inset 2px 0 2px -1px #c8c8c8, inset -2px 0 2px -1px #c8c8c8"></div>
<div class="t cell" style="left:586px;top:573.5px">1oT Test</div>
<svg class="a" style="left:680px;top:573px" width="5" height="10" viewBox="0 0 5 10"><path d="M2.5 0L5 3.8H0Z M2.5 10L5 6.2H0Z" fill="#222"/></svg>
<div class="t cell" style="left:698px;top:568px;line-height:19px"><span style="display:inline-block;height:19px;line-height:19px;padding:0 7px;margin-right:5.6px;border-radius:2px;background:#e6e5e0;color:#666">broken</span><span style="display:inline-block;height:19px;line-height:19px;padding:0 7px;margin-right:5.6px;border-radius:2px;background:#e6e5e0;color:#666">else</span></div>
<svg style="position:absolute;left:803px;top:570.5px" width="14.5" height="14.5" viewBox="0 0 24 24"><path fill="#8a8a8a" d="M3 17.25V21h3.75L17.81 9.94l-3.75-3.75L3 17.25zM20.71 7.04c.39-.39.39-1.02 0-1.41l-2.34-2.34c-.39-.39-1.02-.39-1.41 0l-1.83 1.83 3.75 3.75 1.83-1.83z"/></svg>
<svg style="position:absolute;left:891px;top:570.5px" width="14.5" height="14.5" viewBox="0 0 24 24"><path fill="#8a8a8a" d="M3 17.25V21h3.75L17.81 9.94l-3.75-3.75L3 17.25zM20.71 7.04c.39-.39.39-1.02 0-1.41l-2.34-2.34c-.39-.39-1.02-.39-1.41 0l-1.83 1.83 3.75 3.75 1.83-1.83z"/></svg>
<svg style="position:absolute;left:973px;top:570.5px" width="14.5" height="14.5" viewBox="0 0 24 24"><path fill="#8a8a8a" d="M3 17.25V21h3.75L17.81 9.94l-3.75-3.75L3 17.25zM20.71 7.04c.39-.39.39-1.02 0-1.41l-2.34-2.34c-.39-.39-1.02-.39-1.41 0l-1.83 1.83 3.75 3.75 1.83-1.83z"/></svg>
<div class="t cell" style="left:822px;top:573.5px;color:#222">Lock #3</div>
<div class="t cell" style="left:910px;top:573.5px;color:#222">5 MB</div>
<div class="t cell" style="left:995px;top:573.5px;color:#222">0 B</div>
<div class="t cell" style="left:1062px;top:573.5px;color:#222">0/0</div>
<div class="t cell" style="left:1131px;top:573.5px;color:#222">Sep 22, 2020 20:52:01</div>
<div class="a" style="left:77.5px;top:601.5px;width:14px;height:14px;border:2px solid #e2e2e2;border-radius:3px"></div>
<div class="t cell" style="left:107px;top:603.5px;color:#222;text-decoration:underline;text-decoration-color:#777">8000000000000000903</div>
<div class="t cell" style="left:252px;top:603.5px;color:#222">internet.gdsp</div>
<div class="t cell" style="left:325px;top:603.5px;color:#222">+3721000321</div>
<svg style="position:absolute;left:483px;top:598px" width="22" height="21" viewBox="0 0 22 21"><path fill="#8c8c8c" d="M1.6 0.2H20.4Q21 0.2 21 0.8V15.7Q21 16.3 20.4 16.3H5L0.5 20V0.8Q0.5 0.2 1.1 0.2Z"/><circle cx="6.4" cy="8.2" r="1.35" fill="#fff"/><circle cx="10.7" cy="8.2" r="1.35" fill="#fff"/><circle cx="14.8" cy="8.2" r="1.35" fill="#fff"/></svg>
<div class="a" style="left:518px;top:598px;width:57px;height:19px;border-radius:10px;background:#ededed;border:1px solid #a9a9a9"></div>
<div class="a" style="left:523.5px;top:602.8px;width:10px;height:10px;border-radius:50%;border:1.4px solid #6a6a6a"></div>
<div class="t" style="left:537px;top:604.5px;font-size:7.1px;font-weight:bold;color:#333">OFFLINE</div>
<div class="a" style="left:579px;top:594px;width:110px;height:29px;background:linear-gradient(#e2e2e2,#fbfbfb);box-shadow:inset 2px 0 2px -1px #c8c8c8, inset -2px 0 2px -1px #c8c8c8"></div>
<div class="t cell" style="left:586px;top:603.5px">1oT Test</div>
<svg class="a" style="left:680px;top:603px" width="5" height="10" viewBox="0 0 5 10"><path d="M2.5 0L5 3.8H0Z M2.5 10L5 6.2H0Z" fill="#222"/></svg>
<svg style="position:absolute;left:803px;top:600.5px" width="14.5" height="14.5" viewBox="0 0 24 24"><path fill="#8a8a8a" d="M3 17.25V21h3.75L17.81 9.94l-3.75-3.75L3 17.25zM20.71 7.04c.39-.39.39-1.02 0-1.41l-2.34-2.34c-.39-.39-1.02-.39-1.41 0l-1.83 1.83 3.75 3.75 1.83-1.83z"/></svg>
<svg style="position:absolute;left:891px;top:600.5px" width="14.5" height="14.5" viewBox="0 0 24 24"><path fill="#8a8a8a" d="M3 17.25V21h3.75L17.81 9.94l-3.75-3.75L3 17.25zM20.71 7.04c.39-.39.39-1.02 0-1.41l-2.34-2.34c-.39-.39-1.02-.39-1.41 0l-1.83 1.83 3.75 3.75 1.83-1.83z"/></svg>
<svg style="position:absolute;left:973px;top:600.5px" width="14.5" height="14.5" viewBox="0 0 24 24"><path fill="#8a8a8a" d="M3 17.25V21h3.75L17.81 9.94l-3.75-3.75L3 17.25zM20.71 7.04c.39-.39.39-1.02 0-1.41l-2.34-2.34c-.39-.39-1.02-.39-1.41 0l-1.83 1.83 3.75 3.75 1.83-1.83z"/></svg>
<div class="t cell" style="left:822px;top:603.5px;color:#222">Temperature</div>
<div class="t cell" style="left:910px;top:603.5px;color:#222">80 MB</div>
<div class="t cell" style="left:995px;top:603.5px;color:#222">0 B</div>
<div class="t cell" style="left:1062px;top:603.5px;color:#222">0/0</div>
<div class="t cell" style="left:1131px;top:603.5px;color:#222">Sep 7, 2020 08:50:37</div>
<div class="a" style="left:77.5px;top:631.5px;width:14px;height:14px;border:2px solid #e2e2e2;border-radius:3px"></div>
<div class="t cell" style="left:107px;top:633.5px;color:#9a9a9a;text-decoration:line-through;text-decoration-color:#777">8000000000000000904</div>
<div class="t cell" style="left:252px;top:633.5px;color:#9a9a9a">internet.gdsp</div>
<div class="t cell" style="left:325px;top:633.5px;color:#9a9a9a">+3721000323</div>
<svg style="position:absolute;left:483px;top:628px" width="22" height="21" viewBox="0 0 22 21"><path fill="#8c8c8c" d="M1.6 0.2H20.4Q21 0.2 21 0.8V15.7Q21 16.3 20.4 16.3H5L0.5 20V0.8Q0.5 0.2 1.1 0.2Z"/><circle cx="6.4" cy="8.2" r="1.35" fill="#fff"/><circle cx="10.7" cy="8.2" r="1.35" fill="#fff"/><circle cx="14.8" cy="8.2" r="1.35" fill="#fff"/></svg>
<div class="a" style="left:518px;top:628px;width:57px;height:17px;border-radius:9px;background:#fff;border:1px solid #c6c6c6"></div>
<div class="t" style="left:518px;width:57px;text-align:center;top:632.5px;font-size:9px;letter-spacing:0.15px;font-weight:bold;color:#ec5a55">CLOSED</div>
<div class="t cell" style="left:587px;top:633.5px;color:#aaa">Test 4</div>
<div class="t cell" style="left:698px;top:628px;line-height:19px"><span style="display:inline-block;height:19px;line-height:19px;padding:0 7px;margin-right:5.6px;border-radius:2px;background:#f0efec;color:#b0b0b0">problematic</span><span style="display:inline-block;height:19px;line-height:19px;padding:0 7px;margin-right:5.6px;border-radius:2px;background:#f0efec;color:#b0b0b0">usa</span></div>
<div class="t cell" style="left:822px;top:633.5px;color:#9a9a9a">Sensor #2</div>
<div class="t cell" style="left:910px;top:633.5px;color:#9a9a9a">20 MB</div>
<div class="t cell" style="left:995px;top:633.5px;color:#9a9a9a">0 B</div>
<div class="t cell" style="left:1062px;top:633.5px;color:#9a9a9a">0/0</div>
<div class="t cell" style="left:1131px;top:633.5px;color:#9a9a9a">Sep 3, 2020 09:54:26</div>
<div class="a" style="left:77.5px;top:661.5px;width:14px;height:14px;border:2px solid #e2e2e2;border-radius:3px"></div>
<div class="t cell" style="left:107px;top:663.5px;color:#222;text-decoration:underline;text-decoration-color:#777">8000000000000001004</div>
<div class="t cell" style="left:252px;top:663.5px;color:#222">internet.gdsp</div>
<div class="t cell" style="left:325px;top:663.5px;color:#222">+3721000333</div>
<svg style="position:absolute;left:483px;top:658px" width="22" height="21" viewBox="0 0 22 21"><path fill="#8c8c8c" d="M1.6 0.2H20.4Q21 0.2 21 0.8V15.7Q21 16.3 20.4 16.3H5L0.5 20V0.8Q0.5 0.2 1.1 0.2Z"/><circle cx="6.4" cy="8.2" r="1.35" fill="#fff"/><circle cx="10.7" cy="8.2" r="1.35" fill="#fff"/><circle cx="14.8" cy="8.2" r="1.35" fill="#fff"/></svg>
<div class="a" style="left:518px;top:658px;width:57px;height:19px;border-radius:10px;background:#ededed;border:1px solid #a9a9a9"></div>
<div class="a" style="left:523.5px;top:662.8px;width:10px;height:10px;border-radius:50%;border:1.4px solid #6a6a6a"></div>
<div class="t" style="left:537px;top:664.5px;font-size:7.1px;font-weight:bold;color:#333">OFFLINE</div>
<div class="a" style="left:579px;top:654px;width:110px;height:29px;background:linear-gradient(#e2e2e2,#fbfbfb);box-shadow:inset 2px 0 2px -1px #c8c8c8, inset -2px 0 2px -1px #c8c8c8"></div>
<div class="t cell" style="left:586px;top:663.5px">1oT Test</div>
<svg class="a" style="left:680px;top:663px" width="5" height="10" viewBox="0 0 5 10"><path d="M2.5 0L5 3.8H0Z M2.5 10L5 6.2H0Z" fill="#222"/></svg>
<svg style="position:absolute;left:803px;top:660.5px" width="14.5" height="14.5" viewBox="0 0 24 24"><path fill="#8a8a8a" d="M3 17.25V21h3.75L17.81 9.94l-3.75-3.75L3 17.25zM20.71 7.04c.39-.39.39-1.02 0-1.41l-2.34-2.34c-.39-.39-1.02-.39-1.41 0l-1.83 1.83 3.75 3.75 1.83-1.83z"/></svg>
<svg style="position:absolute;left:891px;top:660.5px" width="14.5" height="14.5" viewBox="0 0 24 24"><path fill="#8a8a8a" d="M3 17.25V21h3.75L17.81 9.94l-3.75-3.75L3 17.25zM20.71 7.04c.39-.39.39-1.02 0-1.41l-2.34-2.34c-.39-.39-1.02-.39-1.41 0l-1.83 1.83 3.75 3.75 1.83-1.83z"/></svg>
<svg style="position:absolute;left:973px;top:660.5px" width="14.5" height="14.5" viewBox="0 0 24 24"><path fill="#8a8a8a" d="M3 17.25V21h3.75L17.81 9.94l-3.75-3.75L3 17.25zM20.71 7.04c.39-.39.39-1.02 0-1.41l-2.34-2.34c-.39-.39-1.02-.39-1.41 0l-1.83 1.83 3.75 3.75 1.83-1.83z"/></svg>
<div class="t cell" style="left:822px;top:663.5px;color:#222">This one is wi...</div>
<div class="t cell" style="left:910px;top:663.5px;color:#222">100 MB</div>
<div class="t cell" style="left:995px;top:663.5px;color:#222">0 B</div>
<div class="t cell" style="left:1062px;top:663.5px;color:#222">0/0</div>
<div class="t cell" style="left:1131px;top:663.5px;color:#222">Jul 21, 2020</div>
<div class="a" style="left:77.5px;top:691.5px;width:14px;height:14px;border:2px solid #e2e2e2;border-radius:3px"></div>
<div class="t cell" style="left:107px;top:693.5px;color:#222;text-decoration:underline;text-decoration-color:#777">8000000000000000002</div>
<div class="t cell" style="left:252px;top:693.5px;color:#222">internet.gdsp</div>
<div class="t cell" style="left:325px;top:693.5px;color:#222">+3721000319</div>
<svg style="position:absolute;left:483px;top:688px" width="22" height="21" viewBox="0 0 22 21"><path fill="#8c8c8c" d="M1.6 0.2H20.4Q21 0.2 21 0.8V15.7Q21 16.3 20.4 16.3H5L0.5 20V0.8Q0.5 0.2 1.1 0.2Z"/><circle cx="6.4" cy="8.2" r="1.35" fill="#fff"/><circle cx="10.7" cy="8.2" r="1.35" fill="#fff"/><circle cx="14.8" cy="8.2" r="1.35" fill="#fff"/></svg>
<div class="a" style="left:518px;top:688px;width:57px;height:19px;border-radius:10px;background:#ededed;border:1px solid #a9a9a9"></div>
<div class="a" style="left:523.5px;top:692.8px;width:10px;height:10px;border-radius:50%;border:1.4px solid #6a6a6a"></div>
<div class="t" style="left:537px;top:694.5px;font-size:7.1px;font-weight:bold;color:#333">OFFLINE</div>
<div class="a" style="left:579px;top:684px;width:110px;height:29px;background:linear-gradient(#e2e2e2,#fbfbfb);box-shadow:inset 2px 0 2px -1px #c8c8c8, inset -2px 0 2px -1px #c8c8c8"></div>
<div class="t cell" style="left:586px;top:693.5px">Estonia</div>
<svg class="a" style="left:680px;top:693px" width="5" height="10" viewBox="0 0 5 10"><path d="M2.5 0L5 3.8H0Z M2.5 10L5 6.2H0Z" fill="#222"/></svg>
<div class="t cell" style="left:698px;top:688px;line-height:19px"><span style="display:inline-block;height:19px;line-height:19px;padding:0 7px;margin-right:5.6px;border-radius:2px;background:#e6e5e0;color:#666">alias</span><span style="display:inline-block;height:19px;line-height:19px;padding:0 7px;margin-right:5.6px;border-radius:2px;background:#e6e5e0;color:#666">test</span></div>
<svg style="position:absolute;left:803px;top:690.5px" width="14.5" height="14.5" viewBox="0 0 24 24"><path fill="#8a8a8a" d="M3 17.25V21h3.75L17.81 9.94l-3.75-3.75L3 17.25zM20.71 7.04c.39-.39.39-1.02 0-1.41l-2.34-2.34c-.39-.39-1.02-.39-1.41 0l-1.83 1.83 3.75 3.75 1.83-1.83z"/></svg>
<svg style="position:absolute;left:891px;top:690.5px" width="14.5" height="14.5" viewBox="0 0 24 24"><path fill="#8a8a8a" d="M3 17.25V21h3.75L17.81 9.94l-3.75-3.75L3 17.25zM20.71 7.04c.39-.39.39-1.02 0-1.41l-2.34-2.34c-.39-.39-1.02-.39-1.41 0l-1.83 1.83 3.75 3.75 1.83-1.83z"/></svg>
<svg style="position:absolute;left:973px;top:690.5px" width="14.5" height="14.5" viewBox="0 0 24 24"><path fill="#8a8a8a" d="M3 17.25V21h3.75L17.81 9.94l-3.75-3.75L3 17.25zM20.71 7.04c.39-.39.39-1.02 0-1.41l-2.34-2.34c-.39-.39-1.02-.39-1.41 0l-1.83 1.83 3.75 3.75 1.83-1.83z"/></svg>
<div class="t cell" style="left:822px;top:693.5px;color:#222">NGO Tester</div>
<div class="t cell" style="left:910px;top:693.5px;color:#222">1000 MB</div>
<div class="t cell" style="left:995px;top:693.5px;color:#222">0 B</div>
<div class="t cell" style="left:1062px;top:693.5px;color:#222">0/0</div>
<div class="t cell" style="left:1131px;top:693.5px;color:#222">Jul 2, 2020 09:54:56</div>
<div class="a" style="left:1176px;top:645px;width:75px;height:26px;background:#2b6964;border-radius:13px 5px 13px 13px"></div>
<svg class="a" style="left:1182px;top:652px" width="13" height="13" viewBox="0 0 13 13"><circle cx="6.5" cy="6.5" r="5.4" fill="none" stroke="#fff" stroke-width="1.2"/><path d="M4.7 5.2Q4.7 3.4 6.5 3.4Q8.3 3.4 8.3 5Q8.3 6 7.2 6.5Q6.5 6.9 6.5 7.7" fill="none" stroke="#fff" stroke-width="1.2"/><circle cx="6.5" cy="9.4" r="0.75" fill="#fff"/></svg>
<div class="t" style="left:1199px;top:653px;font-size:10.2px;font-weight:bold;color:#fff">Support</div>
<svg class="a" style="left:53px;top:686px" width="12" height="10" viewBox="0 0 12 10"><path d="M2 5.5Q4 8.5 8 10" fill="none" stroke="#9a9a9a" stroke-width="1.6"/></svg>
</body></html>
